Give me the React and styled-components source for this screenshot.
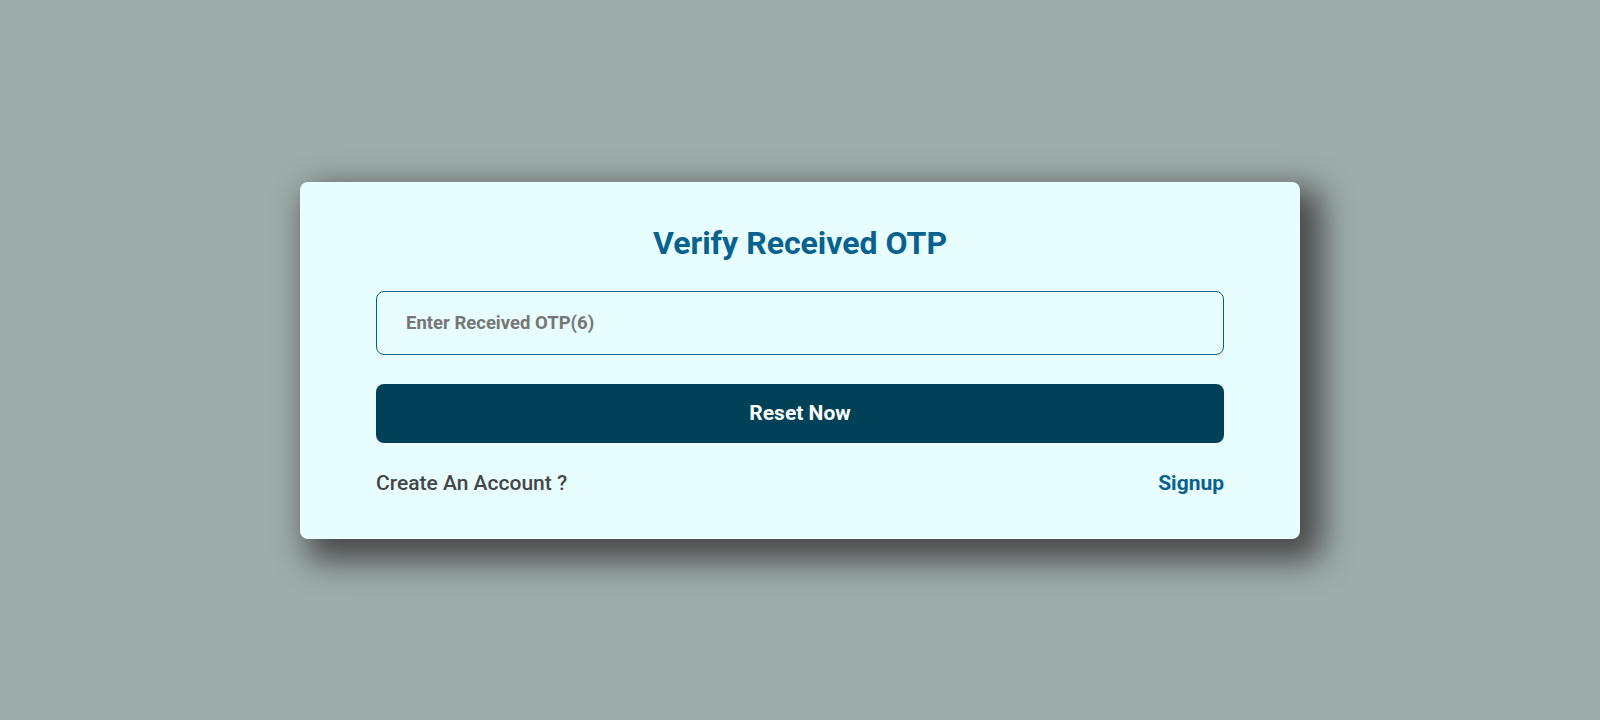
import styled, { createGlobalStyle } from 'styled-components';
import { useState } from 'react';

const GlobalStyle = createGlobalStyle`
  * {
    box-sizing: border-box;
  }

  body {
    margin: 0;
    font-family: Roboto, 'Liberation Sans', sans-serif;
    background-color: #9eadaa;
  }
`;

const App = () => {
  const [otp, setOtp] = useState('');

  return (
    <Page>
      <GlobalStyle />
      <Card>
        <Title>Verify Received OTP</Title>
        <Input
          type="text"
          placeholder="Enter Received OTP(6)"
          value={otp}
          onChange={(e) => setOtp(e.target.value)}
        />
        <SubmitButton type="button">Reset Now</SubmitButton>
        <Footer>
          <FooterText>Create An Account ?</FooterText>
          <SignupLink href="#">Signup</SignupLink>
        </Footer>
      </Card>
    </Page>
  );
};

const Page = styled.main`
  min-height: 720px;
  display: flex;
  align-items: center;
  justify-content: center;
`;

const Card = styled.section`
  width: 1000px;
  padding: 45px 76px 44px;
  display: flex;
  flex-direction: column;
  background-color: #e8fdfe;
  border-radius: 8px;
  box-shadow: 14px 14px 32px 8px rgba(65, 65, 65, 0.92);
`;

const Title = styled.h2`
  margin: 0 0 32px;
  text-align: center;
  font-size: 32px;
  line-height: 32px;
  font-weight: 700;
  color: #08628f;
`;

const Input = styled.input`
  height: 64px;
  width: 100%;
  padding: 0 29px;
  border: 1px solid #0b5f85;
  border-radius: 8px;
  background: transparent;
  font-family: inherit;
  font-size: 18.5px;
  font-weight: 700;
  color: #333;
  outline: none;

  &::placeholder {
    color: #767676;
  }
`;

const SubmitButton = styled.button`
  margin-top: 29px;
  height: 59px;
  width: 100%;
  border: none;
  border-radius: 8px;
  background-color: #004158;
  color: #fff;
  font-family: inherit;
  font-size: 21px;
  font-weight: 700;
  cursor: pointer;
`;

const Footer = styled.div`
  margin-top: 28px;
  display: flex;
  justify-content: space-between;
  align-items: center;
  line-height: 24px;
`;

const FooterText = styled.span`
  font-size: 21px;
  font-weight: 500;
  color: #454545;
`;

const SignupLink = styled.a`
  font-size: 21px;
  font-weight: 700;
  color: #08628f;
  text-decoration: none;
`;

export default App;
